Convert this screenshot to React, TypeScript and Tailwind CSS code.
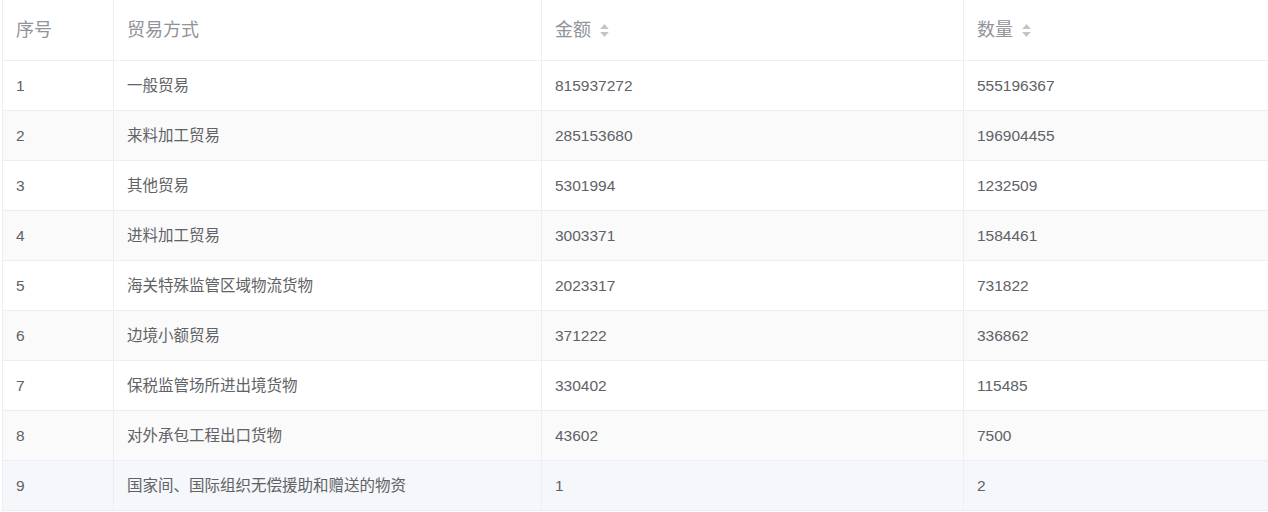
const rows: [string, string, string][] = [
  ["一般贸易", "815937272", "555196367"],
  ["来料加工贸易", "285153680", "196904455"],
  ["其他贸易", "5301994", "1232509"],
  ["进料加工贸易", "3003371", "1584461"],
  ["海关特殊监管区域物流货物", "2023317", "731822"],
  ["边境小额贸易", "371222", "336862"],
  ["保税监管场所进出境货物", "330402", "115485"],
  ["对外承包工程出口货物", "43602", "7500"],
  ["国家间、国际组织无偿援助和赠送的物资", "1", "2"],
];

function Sort() {
  return (
    <svg width="11" height="15" viewBox="0 0 10 14" className="ml-[8px]">
      <path d="M5 1 L9 5.5 H1 Z" fill="#c0c4cc" />
      <path d="M5 13 L9 8.5 H1 Z" fill="#c0c4cc" />
    </svg>
  );
}

export default function App() {
  const cols = "grid grid-cols-[111px_428px_422px_1fr]";
  const cell = "flex items-center px-[13px] border-r border-[#ebeef5]";
  return (
    <div className="w-[1268px] h-[512px] bg-white pl-[2px]" style={{ fontFamily: '"Helvetica Neue", "Liberation Sans", "Noto Sans CJK SC", sans-serif' }}>
      <div className="border-l border-[#ebeef5] text-[15.5px] text-[#606266]">
        <div className={`${cols} h-[61px] border-b border-[#ebeef5] text-[#909399] text-[18px]`}>
          <div className={cell}>序号</div>
          <div className={cell}>贸易方式</div>
          <div className={cell}>金额<Sort /></div>
          <div className={`${cell} border-r-0`}>数量<Sort /></div>
        </div>
        {rows.map((r, i) => (
          <div key={i} className={`${cols} h-[50px] border-b border-[#ebeef5] ${i === 8 ? "bg-[#f5f7fa]" : i % 2 === 1 ? "bg-[#fafafa]" : "bg-white"}`}>
            <div className={cell}>{i + 1}</div>
            <div className={cell}>{r[0]}</div>
            <div className={cell}>{r[1]}</div>
            <div className={`${cell} border-r-0`}>{r[2]}</div>
          </div>
        ))}
      </div>
    </div>
  );
}
